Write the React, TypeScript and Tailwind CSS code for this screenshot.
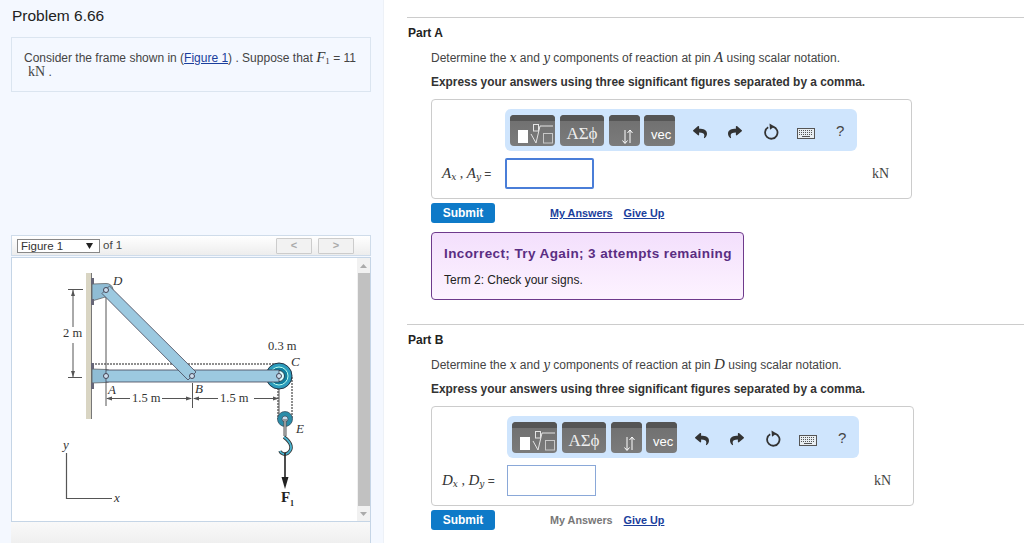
import React from "react";
import { FaReply, FaShare } from "react-icons/fa";

const sans = "font-['Liberation_Sans',Arial,sans-serif]";
const serif = "font-['Liberation_Serif','Times_New_Roman',serif]";
const dj = "font-['DejaVu_Serif',serif]";

function M({ children }: { children: React.ReactNode }) {
  return <i className={`${serif} text-[15px] leading-[14px] text-[#333]`}>{children}</i>;
}
function V({ children }: { children: React.ReactNode }) {
  return <i className={`${dj} text-[12px] leading-[14px] text-[#333]`}>{children}</i>;
}
function S({ children }: { children: React.ReactNode }) {
  return <sub className={`${dj} italic text-[9px] leading-[8px] text-[#333]`}>{children}</sub>;
}

function Btn({ w, children }: { w: string; children: React.ReactNode }) {
  return (
    <div className={`${w} h-[31px] rounded-[4px] bg-gradient-to-b from-[#6f6f6f] to-[#7b7b7b] overflow-hidden flex flex-col shrink-0`}>
      <div className="h-[6px] bg-[#555555] shrink-0" />
      <div className="flex-1 relative text-white">{children}</div>
    </div>
  );
}

function Toolbar() {
  return (
    <div className="w-[352px] h-[42px] bg-[#cfe5fd] rounded-[6px] flex items-center pl-[5px]">
      <Btn w="w-[45px]">
        <svg width="45" height="25" viewBox="0 0 45 25" fill="none">
          <rect x="8" y="9" width="10" height="13" fill="#fff" />
          <rect x="23.5" y="3.5" width="5" height="6.5" stroke="#e4e4e4" strokeWidth="1" />
          <path d="M21 13l5 9 4-17h13" stroke="#e4e4e4" strokeWidth="1" />
          <rect x="33.5" y="12.5" width="9" height="9.5" stroke="#c8c8c8" strokeWidth="1" />
        </svg>
      </Btn>
      <div className="w-[5px]" />
      <Btn w="w-[44px]">
        <div className={`${serif} text-[17px] leading-[25px] text-center text-[#eee] whitespace-nowrap`}>ΑΣϕ</div>
      </Btn>
      <div className="w-[5px]" />
      <Btn w="w-[31px]">
        <svg width="31" height="25" viewBox="0 0 31 25" fill="none" stroke="#fff" strokeWidth="1">
          <path d="M16 9v13M13.5 19.5L16 22.5l2.5-3M21 22V9M18.5 12L21 9l2.5 3" />
        </svg>
      </Btn>
      <div className="w-[4px]" />
      <Btn w="w-[31px]">
        <div className={`${sans} text-[13px] leading-[12px] pt-[8px] pl-[7px] text-white whitespace-nowrap`}>vec</div>
      </Btn>
      <div className="ml-[18px] mt-[3px] w-[14px] flex justify-center text-[#333]"><FaReply size={14} /></div>
      <div className="ml-[21px] mt-[3px] w-[14px] flex justify-center text-[#333]"><FaShare size={14} /></div>
      <svg className="ml-[21px] mt-[3px]" width="16" height="18" viewBox="0 0 16 18" fill="none">
        <path d="M5.2 4.2A6.2 6.2 0 1 0 10 3.6" stroke="#333" strokeWidth="1.8" />
        <path d="M6.5 0.5L11.5 3.6 7 6.8z" fill="#333" />
      </svg>
      <svg className="ml-[18px] mt-[7px]" width="18" height="11" viewBox="0 0 18 11" fill="none">
        <rect x="0.5" y="0.5" width="17" height="10" fill="#e8eef2" stroke="#555" />
        <path d="M2 2.5h14M2 4.5h14M2 6.5h14" stroke="#555" strokeWidth="1" strokeDasharray="1 1" />
        <path d="M5 8.5h8" stroke="#555" />
      </svg>
      <div className={`${sans} ml-[21px] mt-[1px] text-[15px] text-[#444] leading-none`}>?</div>
    </div>
  );
}

function Part({
  name, pin, a, width, shift, focused, link,
}: { name: string; pin: string; a: string; width: string; shift: string; focused: boolean; link: boolean }) {
  return (
    <section>
      <div className="border-t border-[#cccccc]" />
      <div className={`mt-[7px] pl-[1px] font-bold text-[12px] leading-[16px] text-[#222] ${sans}`}>Part {name}</div>
      <div className="ml-[24px]">
        <p className="mt-[9px] text-[12px] leading-[16px] text-[#444] whitespace-nowrap">
          Determine the <V>x</V> and <V>y</V> components of reaction at pin <M>{pin}</M> using scalar notation.
        </p>
        <p className="mt-[8px] font-bold text-[11.9px] leading-[16px] text-[#333] whitespace-nowrap">
          Express your answers using three significant figures separated by a comma.
        </p>
        <div className={`mt-[9px] ${width} h-[100px] border border-[#cccccc] rounded-[4px] bg-white`}>
          <div className={`mt-[9px] ${shift}`}><Toolbar /></div>
          <div className="mt-[7px] flex items-center h-[31px]">
            <div className="pl-[10px] w-[73px] text-[12px] whitespace-nowrap text-[#444]" >
              <M>{a}</M><S>x</S><span className={`${serif} text-[14px]`}> , </span><M>{a}</M><S>y</S> =
            </div>
            <div className={`${shift === "ml-[73px]" ? "" : "ml-[2px]"} w-[89px] h-[31px] bg-white border ${focused ? "border-2 border-[#4a7ed8] rounded-[2px]" : "border-[#8aa8d8]"}`} />
            <div className={`ml-auto mr-[22px] ${serif} text-[14px] text-[#444]`}>kN</div>
          </div>
        </div>
        <div className="mt-[4px] flex items-center">
          <div className="w-[64px] h-[20px] bg-[#0e7ac8] rounded-[3px] text-white font-bold text-[12px] leading-[20px] text-center">Submit</div>
          <div className={`ml-[55px] font-bold text-[10.8px] ${link ? "text-[#1a3e9c] underline" : "text-[#777]"}`}>My Answers</div>
          <div className="ml-[11px] font-bold text-[10.8px] text-[#1a3e9c] underline">Give Up</div>
        </div>
      </div>
    </section>
  );
}

function Figure() {
  const dim = "#555";
  const t = { fontFamily: "'Liberation Serif',serif", fill: "#333" } as const;
  return (
    <svg width="345" height="263" viewBox="12 257 345 263" className="block shrink-0">
      <rect x="86" y="272" width="6" height="146" fill="#d9d5c3" />
      <rect x="91" y="272" width="1" height="146" fill="#777" />
      {/* rope */}
      <path d="M92 363H279" stroke="#8f8f8f" strokeWidth="2" strokeDasharray="2 1" />
      <path d="M292 376V418M278 381V418" stroke="#8f8f8f" strokeWidth="2" strokeDasharray="2 1" />
      {/* dims */}
      <g stroke={dim} strokeWidth="1" fill="none">
        <path d="M68 288.5H83M68 376.5H82M73 289V326M73 342V376" />
        <path d="M106 289V405M192.5 382V407M279 382V420" />
        <path d="M107 397.5H130M162 397.5H191M194 397.5H218M254 397.5H278" />
      </g>
      <path d="M73 289l-2 6h4zM73 376l-2-6h4zM106 397.5l6-2v4zM192 397.5l-6-2v4zM193 397.5l6-2v4zM279 397.5l-6-2v4z" fill={dim} />
      {/* brackets */}
      <path d="M92 283L106 282.5A6.5 6.5 0 0 1 107 295.5L92 300z" fill="#8fbcd4" stroke="#555" strokeWidth="0.7" />
      <path d="M92 368L106 368.5A6.5 6.5 0 0 1 106 381.5L92 382z" fill="#8fbcd4" stroke="#555" strokeWidth="0.7" />
      <rect x="91" y="277" width="3" height="6" fill="#667" />
      <rect x="91" y="298" width="3" height="6" fill="#667" />
      <rect x="91" y="362" width="3" height="6" fill="#667" />
      <rect x="91" y="382" width="3" height="6" fill="#667" />
      {/* pulley C */}
      <circle cx="279" cy="375" r="13" fill="#2b9cbd" stroke="#234" strokeWidth="1" />
      <circle cx="279" cy="375" r="9" fill="#0f7f9f" stroke="#bfe" strokeWidth="1" />
      <circle cx="279" cy="375" r="5.5" fill="#dff" stroke="#245" strokeWidth="1" />
      {/* bars */}
      <rect x="106" y="369" width="173" height="12" fill="#9cc9e0" stroke="#445" strokeWidth="0.8" />
      <path d="M102 292.5L109.5 285L196 371L188 379Z" fill="#9cc9e0" stroke="#445" strokeWidth="0.8" />
      <circle cx="106" cy="289" r="2.5" fill="#cde" stroke="#445" />
      <circle cx="106" cy="375" r="2.5" fill="#cde" stroke="#445" />
      <circle cx="192" cy="375" r="2.5" fill="#cde" stroke="#445" />
      <circle cx="279" cy="375" r="2.5" fill="#cde" stroke="#445" />
      {/* lower pulley and hook */}
      <circle cx="285" cy="418" r="7.5" fill="#2b8ca8" stroke="#345" strokeWidth="0.7" />
      <circle cx="285" cy="418" r="3" fill="#cde" stroke="#345" strokeWidth="0.7" />
      <path d="M285 418V435" stroke="#555" strokeWidth="3" />
      <path d="M285 418V435" stroke="#ddd" strokeWidth="1" />
      <path d="M284 436C292 442 293 448 288 452C285 454 281 453 280 450" stroke="#333" strokeWidth="3.5" fill="none" />
      <path d="M284 436C292 442 293 448 288 452C285 454 281 453 280 450" stroke="#4ab4d0" strokeWidth="1.8" fill="none" />
      <path d="M285 452V480" stroke="#222" strokeWidth="1.6" />
      <path d="M285 488l-3.5-12h7z" fill="#222" />
      {/* axes */}
      <path d="M66.5 452V497.5H112" stroke="#555" strokeWidth="1.2" fill="none" />
      <g style={{ ...t, fontStyle: "italic" }} fontSize="13">
        <text x="113" y="284">D</text>
        <text x="108" y="393">A</text>
        <text x="195" y="392">B</text>
        <text x="291" y="365">C</text>
        <text x="296" y="432">E</text>
        <text x="63" y="448">y</text>
        <text x="114" y="501">x</text>
      </g>
      <g style={t} fontSize="12.5">
        <text x="63" y="336">2 m</text>
        <text x="132" y="401">1.5 m</text>
        <text x="220" y="401">1.5 m</text>
        <text x="268" y="349">0.3 m</text>
      </g>
      <text x="281" y="501" style={{ ...t, fill: "#222", fontWeight: 700 }} fontSize="15">F</text>
      <text x="290" y="505" style={{ ...t, fill: "#222", fontWeight: 700 }} fontSize="8">1</text>
    </svg>
  );
}

function Pager({ children }: { children: React.ReactNode }) {
  return (
    <div className="w-[36px] h-[16px] border border-[#cccccc] bg-[#f2f2f2] rounded-[1px] text-[#aaa] text-[11px] leading-[13px] text-center font-bold">{children}</div>
  );
}

export default function App() {
  return (
    <div className={`${sans} w-[1024px] h-[543px] overflow-hidden flex bg-white`}>
      <aside className="w-[384px] h-[543px] shrink-0 bg-[#f4f8ff] border-r border-[#edf1f7] pl-[11px] overflow-hidden">
        <h1 className="pt-[7px] pl-[1px] text-[15.5px] leading-[18px] font-normal text-[#222]">Problem 6.66</h1>
        <div className="mt-[12px] w-[360px] h-[55px] border border-[#dbe5f0] pl-[12px] pt-[12px] text-[12px] leading-[14px] text-[#444]">
          <div className="whitespace-nowrap">
            Consider the frame shown in (<span className="text-[#1a3e9c] underline">Figure 1</span>) . Suppose that <M>F</M><sub className={`${serif} text-[9px] leading-[8px] text-[#333]`}>1</sub> = 11
          </div>
          <div className={`pl-[4px] whitespace-nowrap`}><span className={`${serif} text-[14px]`}>kN</span> .</div>
        </div>
        <div className="mt-[143px] w-[360px] h-[21px] border border-[#cfdcea] bg-gradient-to-b from-white to-[#ededed] flex items-center pl-[5px] text-[11.5px] text-[#444]">
          <div className="w-[83px] h-[14px] border border-[#888] bg-white flex items-center justify-between pl-[3px] pr-[6px] leading-[12px] text-[#333]">
            <span>Figure 1</span>
            <svg width="7" height="6" viewBox="0 0 7 6"><path d="M0 0h7L3.5 6z" fill="#222" /></svg>
          </div>
          <span className="ml-[3px]">of 1</span>
          <div className="ml-auto mr-[16px] flex gap-[6px]">
            <Pager>&lt;</Pager>
            <Pager>&gt;</Pager>
          </div>
        </div>
        <div className="mt-[1px] w-[360px] h-[265px] border border-[#c5d5e6] bg-white flex">
          <Figure />
          <div className="w-[13px] h-[263px] bg-[#f1f1f1] flex flex-col items-center">
            <svg className="mt-[6px]" width="7" height="4" viewBox="0 0 7 4"><path d="M3.5 0L7 4H0z" fill="#aaa" /></svg>
            <div className="mt-[5px] w-[12px] h-[233px] bg-[#c1c1c1]" />
            <svg className="mt-[6px]" width="7" height="4" viewBox="0 0 7 4"><path d="M0 0h7L3.5 4z" fill="#aaa" /></svg>
          </div>
        </div>
        <div className="w-[360px] h-[24px] border-r border-[#c5d5e6] bg-gradient-to-b from-[#f9f9f9] to-[#eeeeee]" />
      </aside>
      <main className="flex-1 pl-[23px] pt-[17px] min-w-0">
        <Part name="A" pin="A" a="A" width="w-[481px]" shift="ml-[73px]" focused link />
        <div className="ml-[24px] mt-[9px] w-[313px] h-[68px] border border-[#6e3a8c] rounded-[4px] bg-gradient-to-b from-[#f3dffc] to-[#fdf3ff] px-[12px]">
          <div className="mt-[12px] font-bold text-[13.5px] leading-[18px] tracking-[0.4px] text-[#5a2d82] whitespace-nowrap">Incorrect; Try Again; 3 attempts remaining</div>
          <div className="mt-[9px] text-[12px] leading-[16px] text-[#222]">Term 2: Check your signs.</div>
        </div>
        <div className="mt-[24px]">
          <Part name="B" pin="D" a="D" width="w-[483px]" shift="ml-[75px]" focused={false} link={false} />
        </div>
      </main>
    </div>
  );
}
